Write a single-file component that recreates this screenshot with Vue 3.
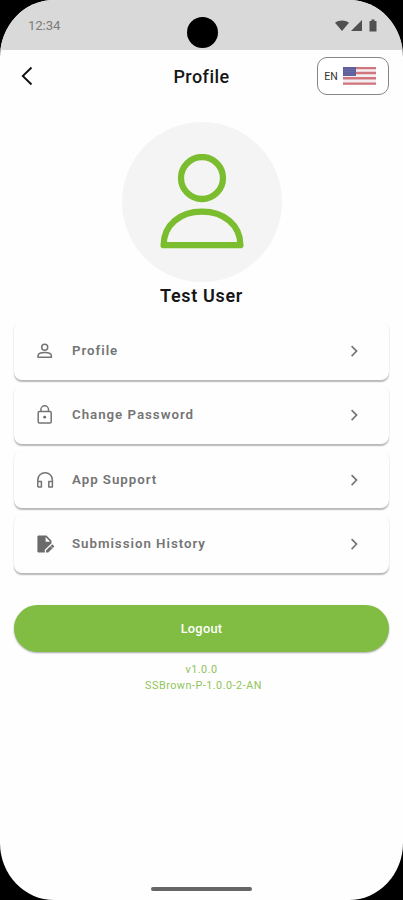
<script setup>
const items = [
  { label: 'Profile', icon: 'user' },
  { label: 'Change Password', icon: 'lock' },
  { label: 'App Support', icon: 'headphones' },
  { label: 'Submission History', icon: 'document' },
]
</script>

<template>
  <div class="device">
    <main class="screen">
      <div class="status">
        <span class="time">12:34</span>
        <span class="camera"></span>
        <svg class="signals" width="43" height="14" viewBox="0 0 43 14" fill="#505050">
          <path d="M0 3.7C4 .6 10 .6 14 3.7L7 12Z" />
          <path d="M27 1V12H16Z" />
          <path d="M34.5 2H36.5V.5H39.5V2H41.5V12.5H34.5Z" />
        </svg>
      </div>

      <header class="header">
        <svg class="back" width="12" height="20" viewBox="0 0 12 20">
          <path d="M10.5 1.5L1.8 10L10.5 18.5" fill="none" stroke="#111" stroke-width="1.9" />
        </svg>
        <h1>Profile</h1>
        <button class="language">
          <span>EN</span>
          <svg width="33" height="18" viewBox="0 0 33 18">
            <rect width="33" height="18" fill="#f4eff2" />
            <path d="M0 1H33M0 6H33M0 11.2H33M0 16.6H33" stroke="#cf777d" stroke-width="2.4" />
            <rect width="13" height="9" fill="#5f5f9b" />
            <path d="M1.5 2.5H12M1.5 4.7H12M1.5 6.9H12" stroke="#8583b3" stroke-width=".7" stroke-dasharray="1 1" />
          </svg>
        </button>
      </header>

      <section class="identity">
        <div class="avatar">
          <svg width="84" height="96" viewBox="0 0 84 96" fill="none" stroke="#7abd2e" stroke-width="6.3" stroke-linejoin="round">
            <circle cx="42" cy="24" r="21" />
            <path d="M3.6 91.2C3.6 71 20 57.7 42 57.7S80.4 71 80.4 91.2Z" />
          </svg>
        </div>
        <h2>Test User</h2>
      </section>

      <nav class="menu">
        <a v-for="item in items" :key="item.label" class="card">
          <svg class="icon" width="20" height="20" viewBox="0 0 20 20" fill="none" stroke="#747474" stroke-width="1.5" stroke-linejoin="round">
            <template v-if="item.icon === 'user'">
              <circle cx="9.7" cy="6.2" r="3" />
              <path d="M3 16.2V15C3 12.8 6 11.6 9.7 11.6S16.4 12.8 16.4 15V16.2Z" />
            </template>
            <template v-else-if="item.icon === 'lock'">
              <rect x="3.2" y="6.5" width="13" height="11.4" rx="1.2" />
              <path d="M5.9 6.5V4.6A3.8 3.8 0 0 1 13.5 4.6V6.5" />
              <circle cx="9.7" cy="12.2" r="1.4" fill="#6b6b6b" stroke="none" />
            </template>
            <template v-else-if="item.icon === 'headphones'">
              <path d="M2.8 17V10A7.3 7.3 0 0 1 17.4 10V17H13.8V11.6H17.4M2.8 11.6H6.4V17H2.8" />
            </template>
            <template v-else>
              <path d="M3.5 1.5H11.5L16.5 6.7V9.2L9.8 15.7V18.5H3.5Q2.4 18.5 2.4 17.4V2.6Q2.4 1.5 3.5 1.5Z" fill="#6b6b6b" stroke="none" />
              <path d="M10.6 3V7.8H15.2Z" fill="#fff" stroke="none" />
              <path d="M11 18.5V16.5L17.3 10.3L19.4 12.4L13.2 18.5Z" fill="#6b6b6b" stroke="none" />
              <path d="M15.6 12.2L17.6 14.2" stroke="#fff" stroke-width=".7" />
            </template>
          </svg>
          <span class="label">{{ item.label }}</span>
          <svg width="8" height="14" viewBox="0 0 8 14">
            <path d="M1.6 2.1L6.6 7.1L1.6 12.1" fill="none" stroke="#747474" stroke-width="1.6" />
          </svg>
        </a>
      </nav>

      <button class="logout">Logout</button>
      <footer class="version">
        <div>v1.0.0</div>
        <div class="build">SSBrown-P-1.0.0-2-AN</div>
      </footer>
      <div class="home"></div>
    </main>
  </div>
</template>

<style>
body {
  margin: 0;
  background: #000;
}
</style>

<style scoped>
.device {
  width: 403px;
  height: 900px;
  background: #000;
  font-family: Roboto, sans-serif;
}

.screen {
  display: flex;
  flex-direction: column;
  width: 403px;
  height: 900px;
  box-sizing: border-box;
  overflow: hidden;
  border-radius: 54px / 57px;
  background: #fefefe;
}

.status {
  display: grid;
  grid-template-columns: 1fr 31px 1fr;
  align-items: start;
  height: 49.5px;
  flex: none;
  padding: 0 25px 0 28px;
  box-sizing: border-box;
  background: #d9d9d9;
}

.time {
  padding-top: 16.5px;
  font-size: 13.2px;
  line-height: 17px;
  letter-spacing: -0.1px;
  color: #7c7c7c;
}

.camera {
  width: 31px;
  height: 31px;
  margin-top: 17px;
  margin-left: -0.5px;
  border-radius: 50%;
  background: #000;
}

.signals {
  justify-self: end;
  margin-top: 18.5px;
}

.header {
  display: grid;
  grid-template-columns: 72px 1fr 72px;
  align-items: center;
  height: 53px;
  flex: none;
  padding: 0 14.5px;
}

.back {
  margin-left: 6.5px;
}

h1,
h2 {
  margin: 0;
  text-align: center;
  color: #161616;
}

h1 {
  padding-top: 2px;
  font-size: 18px;
  font-weight: 500;
  line-height: 22px;
  letter-spacing: 0.45px;
}

.language {
  display: flex;
  align-items: center;
  gap: 4px;
  width: 72px;
  height: 38px;
  padding: 0 0 0 6px;
  box-sizing: border-box;
  border: 1px solid #858585;
  border-radius: 10px;
  background: #fff;
  color: #333;
  font: 400 10.5px/14px Roboto, sans-serif;
}

.language span {
  width: 15px;
  padding-top: 1px;
}

.identity {
  display: flex;
  flex-direction: column;
  align-items: center;
  padding-top: 19.5px;
}

.avatar {
  display: grid;
  place-items: center;
  width: 160px;
  height: 160px;
  border-radius: 50%;
  background: #f4f4f4;
}

h2 {
  margin-top: 3px;
  font-size: 18px;
  font-weight: 600;
  line-height: 22px;
  letter-spacing: 0.65px;
}

.menu {
  display: flex;
  flex-direction: column;
  gap: 6.9px;
  margin: 15px 14px 0;
}

.card {
  display: flex;
  align-items: center;
  height: 57.5px;
  padding: 0.5px 31px 0 21px;
  box-sizing: border-box;
  border-radius: 8px;
  background: #fefefe;
  box-shadow: 0 1.5px 1.5px rgba(0, 0, 0, 0.28);
}

.label {
  flex: 1;
  margin-left: 17px;
  font-size: 13.3px;
  font-weight: 600;
  line-height: 18px;
  letter-spacing: 0.97px;
  color: #747474;
}

.logout {
  flex: none;
  height: 47px;
  margin: 32px 14px 0;
  padding: 1px 0 0;
  border: 0;
  border-radius: 24px;
  background: #80bd42;
  box-shadow: 0 1px 2px rgba(0, 0, 0, 0.35);
  color: #fff;
  font: 500 12.8px/16px Roboto, sans-serif;
  letter-spacing: 0.25px;
}

.version {
  padding-top: 10.5px;
  text-align: center;
  font-size: 10.8px;
  line-height: 16px;
  letter-spacing: 0.5px;
  color: #91c45b;
}

.build {
  padding-left: 4px;
}

.home {
  width: 101px;
  height: 4px;
  flex: none;
  margin: auto auto 9px;
  border-radius: 2px;
  background: #666;
}
</style>
